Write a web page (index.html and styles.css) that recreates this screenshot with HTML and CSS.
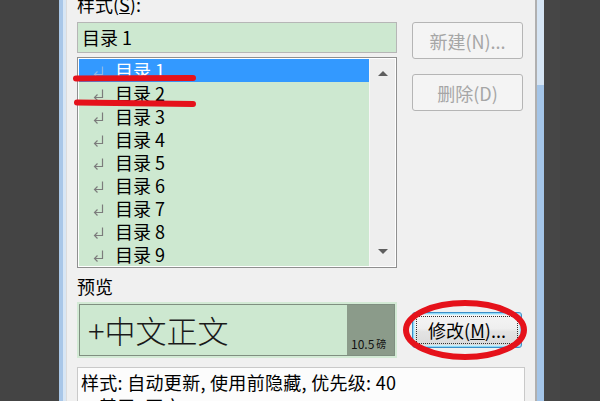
FILE: index.html
```html
<!DOCTYPE html>
<html lang="zh-CN">
<head>
    <meta charset="UTF-8">
    <meta name="viewport" content="width=device-width, initial-scale=1.0">
    <title>样式</title>
    <link rel="stylesheet" href="styles.css">
</head>
<body>
    <div class="screen">
        <div class="desk"></div>
        <div class="window">
            <div class="frame-left"></div>
            <div class="dialog">
                <div class="label top-label">样式(<u>S</u>):</div>

                <!-- Style list and its buttons -->
                <div class="style-row">
                    <div class="style-col">
                        <div class="textbox">目录 1</div>
                        <div class="listbox">
                            <ul class="items">
                                <li class="item selected"><svg class="para" viewBox="0 0 11 12"><path d="M9.5 0.5V8.5H1.5M4.5 5.5L1.5 8.5L4.5 11.5"/></svg><span>目录 1</span></li>
                                <li class="item"><svg class="para" viewBox="0 0 11 12"><path d="M9.5 0.5V8.5H1.5M4.5 5.5L1.5 8.5L4.5 11.5"/></svg><span>目录 2</span></li>
                                <li class="item"><svg class="para" viewBox="0 0 11 12"><path d="M9.5 0.5V8.5H1.5M4.5 5.5L1.5 8.5L4.5 11.5"/></svg><span>目录 3</span></li>
                                <li class="item"><svg class="para" viewBox="0 0 11 12"><path d="M9.5 0.5V8.5H1.5M4.5 5.5L1.5 8.5L4.5 11.5"/></svg><span>目录 4</span></li>
                                <li class="item"><svg class="para" viewBox="0 0 11 12"><path d="M9.5 0.5V8.5H1.5M4.5 5.5L1.5 8.5L4.5 11.5"/></svg><span>目录 5</span></li>
                                <li class="item"><svg class="para" viewBox="0 0 11 12"><path d="M9.5 0.5V8.5H1.5M4.5 5.5L1.5 8.5L4.5 11.5"/></svg><span>目录 6</span></li>
                                <li class="item"><svg class="para" viewBox="0 0 11 12"><path d="M9.5 0.5V8.5H1.5M4.5 5.5L1.5 8.5L4.5 11.5"/></svg><span>目录 7</span></li>
                                <li class="item"><svg class="para" viewBox="0 0 11 12"><path d="M9.5 0.5V8.5H1.5M4.5 5.5L1.5 8.5L4.5 11.5"/></svg><span>目录 8</span></li>
                                <li class="item"><svg class="para" viewBox="0 0 11 12"><path d="M9.5 0.5V8.5H1.5M4.5 5.5L1.5 8.5L4.5 11.5"/></svg><span>目录 9</span></li>
                            </ul>
                            <div class="scrollbar">
                                <span class="arrow-up"></span>
                                <span class="arrow-down"></span>
                            </div>
                        </div>
                    </div>
                    <div class="button-col">
                        <button class="btn" disabled>新建(N)...</button>
                        <button class="btn" disabled>删除(D)</button>
                    </div>
                </div>

                <!-- Preview -->
                <div class="label preview-label">预览</div>
                <div class="preview-row">
                    <div class="preview">
                        <div class="preview-inner">
                            <div class="preview-text">+中文正文</div>
                            <div class="preview-size">10.5 <small>磅</small></div>
                        </div>
                    </div>
                    <button class="btn btn-default"><span class="focus">修改(<u>M</u>)...</span></button>
                </div>

                <div class="description">
                    <div class="desc-line">样式: 自动更新, 使用前隐藏, 优先级: 40</div>
                    <div class="desc-line indent">基于: 正文</div>
                </div>
            </div>
            <div class="frame-right"></div>
        </div>
        <div class="desk desk-right"></div>
    </div>

    <!-- Red marker annotations drawn over the screenshot -->
    <svg class="marks" viewBox="0 0 600 401">
        <path d="M76 78.5Q130 78 193 78"/>
        <path d="M77 102.5Q130 103 193 104"/>
        <ellipse cx="465" cy="330" rx="59" ry="27"/>
    </svg>
</body>
</html>
```

FILE: styles.css
```css
* {
    box-sizing: border-box;
}
html, body {
    margin: 0;
    height: 100%;
}
body {
    background: #444444;
    font-family: "Noto Sans CJK SC", sans-serif;
    font-size: 18px;
    color: #000;
    overflow: hidden;
    position: relative;
}
.screen {
    display: flex;
    height: 401px;
}
.desk {
    width: 59px;
    background: #444444;
}
.desk-right {
    width: 56px;
    background: linear-gradient(to right, #464646 0 16px, #434343 16px);
}
.window {
    display: flex;
    width: 485px;
}
.frame-left {
    width: 8px;
    background: linear-gradient(to right, #a9c7e8 0 4px, #d8e6f4 4px 7px, #dcdcdc 7px);
}
.frame-right {
    width: 9px;
    border-left: 2px solid #b0b0b0;
    background: linear-gradient(#d6e5f4 0 85px, #a4c5e8 85px);
}
.dialog {
    width: 468px;
    background: #f0f0f0;
    padding-left: 10px;
}
.label {
    height: 20px;
    line-height: 20px;
}
.top-label {
    margin-top: -6px;
    margin-bottom: 8px;
}
.style-row {
    display: flex;
    gap: 15px;
}
.style-col {
    width: 320px;
    display: flex;
    flex-direction: column;
    gap: 4px;
}
.textbox {
    height: 31px;
    border: 1px solid #b6b6b6;
    background: #cde8d0;
    padding-left: 4px;
    line-height: 29px;
}
.listbox {
    display: flex;
    height: 211px;
    border: 1px solid #8f8f8f;
    padding: 1px;
    background: #fff;
}
.items {
    flex: 1;
    list-style: none;
    margin: 0;
    padding: 0;
    background: #cde8d0;
}
.item {
    height: 23px;
    display: flex;
    align-items: center;
    gap: 11px;
    padding-left: 14px;
    line-height: 23px;
}
.item.selected {
    background: #3399ff;
    color: #fff;
}
.para {
    width: 11px;
    height: 12px;
    margin-top: 2px;
    fill: none;
    stroke: #7c7c7c;
    stroke-width: 1.2;
}
.selected .para {
    stroke: #8db8e6;
}
.scrollbar {
    width: 26px;
    background: #eeeeee;
    border-left: 1px solid #f6f6f6;
    display: flex;
    flex-direction: column;
    justify-content: space-between;
    align-items: center;
    padding: 12px 0 12px;
}
.arrow-up, .arrow-down {
    width: 0;
    height: 0;
    border-left: 5px solid transparent;
    border-right: 5px solid transparent;
}
.arrow-up {
    border-bottom: 5px solid #5e5e5e;
}
.arrow-down {
    border-top: 5px solid #5e5e5e;
}
.button-col {
    display: flex;
    flex-direction: column;
    gap: 15px;
}
.btn {
    width: 111px;
    height: 37px;
    padding: 0;
    font: inherit;
    border: 1px solid #b5b5b5;
    border-radius: 3px;
    background: #f4f4f4;
    color: #a6a6a6;
}
.preview-label {
    margin-top: 8px;
    margin-bottom: 6px;
}
.preview-row {
    display: flex;
    align-items: center;
    gap: 15px;
}
.preview {
    width: 320px;
    height: 56px;
    border: 2px solid #d3ead5;
    display: flex;
}
.preview-inner {
    flex: 1;
    display: flex;
    border: 1px solid #7f8f80;
    background: #cde8d0;
}
.preview-text {
    flex: 1;
    font-size: 31px;
    font-weight: 300;
    line-height: 50px;
    padding-left: 8px;
    color: #1a1a1a;
}
.preview-size {
    width: 47px;
    background: #8b9b8a;
    font-size: 12px;
    line-height: 14px;
    display: flex;
    align-items: flex-end;
    gap: 2px;
    padding: 0 0 4px 4px;
    color: #111;
}
.preview-size small {
    font-size: 10px;
}
.btn-default {
    width: 110px;
    height: 36px;
    color: #000;
    border-color: #3c8fc8;
    box-shadow: inset 0 0 0 1px #8fdaf8, inset 0 0 0 2px #c6eefb;
    background: linear-gradient(#f5f5f5, #efefef 45%, #e3e3e3 55%, #dadada);
}
.focus {
    display: block;
    margin: 0 3px;
    height: 28px;
    line-height: 26px;
    border: 1px dotted #333;
}
.description {
    width: 448px;
    margin-top: 9px;
    height: 60px;
    border: 1px solid #c9c9c9;
    background: #fcfcfc;
    padding: 2px 0 0 3px;
    letter-spacing: 0.3px;
}
.desc-line {
    height: 24px;
    line-height: 24px;
}
.indent {
    padding-left: 18px;
}
.marks {
    position: absolute;
    left: 0;
    top: 0;
    width: 600px;
    height: 401px;
    pointer-events: none;
    fill: none;
    stroke: #e5121b;
    stroke-width: 6;
    stroke-linecap: round;
}
```
